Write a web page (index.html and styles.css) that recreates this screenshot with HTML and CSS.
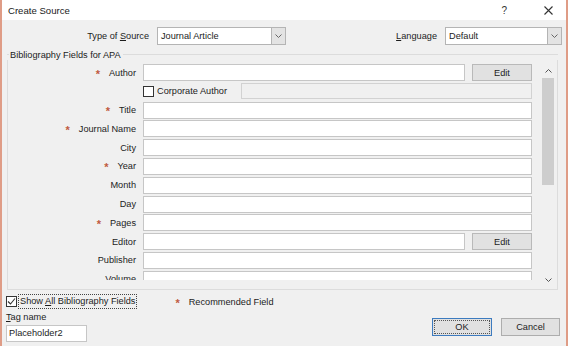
FILE: index.html
```html
<!DOCTYPE html>
<html lang="en">
<head>
    <meta charset="UTF-8">
    <title>Create Source</title>
    <link rel="stylesheet" href="styles.css">
</head>
<body>
    <div class="window">
        <header class="titlebar">
            <span class="title">Create Source</span>
            <span class="help">?</span>
            <span class="close">
                <svg width="9" height="9" viewBox="0 0 9 9"><path d="M0.5 0.5 L8.5 8.5 M8.5 0.5 L0.5 8.5" stroke="#333" stroke-width="1.1" fill="none"/></svg>
            </span>
        </header>

        <div class="content">
            <!-- Source type / language -->
            <div class="source-row">
                <span class="lbl-source">Type of <u>S</u>ource</span>
                <div class="select select-type">
                    <span class="select-text">Journal Article</span>
                    <span class="drop"><svg width="7" height="4" viewBox="0 0 7 4"><path d="M0.5 0.5 L3.5 3.5 L6.5 0.5" stroke="#666" fill="none"/></svg></span>
                </div>
                <span class="lbl-lang"><u>L</u>anguage</span>
                <div class="select select-lang">
                    <span class="select-text">Default</span>
                    <span class="drop"><svg width="7" height="4" viewBox="0 0 7 4"><path d="M0.5 0.5 L3.5 3.5 L6.5 0.5" stroke="#666" fill="none"/></svg></span>
                </div>
            </div>

            <!-- Bibliography fields group -->
            <div class="group">
                <div class="group-title"><span>Bibliography Fields for APA</span></div>
                <div class="group-body">
                    <div class="fields">
                        <div class="lbl"><span class="star">*</span>Author</div>
                        <div class="cell"><div class="input"></div><div class="btn edit">Edit</div></div>

                        <div class="lbl"></div>
                        <div class="cell corp">
                            <span class="checkbox"></span>
                            <span class="corp-text">Corporate Author</span>
                            <div class="input disabled"></div>
                        </div>

                        <div class="lbl"><span class="star">*</span>Title</div>
                        <div class="cell"><div class="input"></div></div>

                        <div class="lbl"><span class="star">*</span>Journal Name</div>
                        <div class="cell"><div class="input"></div></div>

                        <div class="lbl">City</div>
                        <div class="cell"><div class="input"></div></div>

                        <div class="lbl"><span class="star">*</span>Year</div>
                        <div class="cell"><div class="input"></div></div>

                        <div class="lbl">Month</div>
                        <div class="cell"><div class="input"></div></div>

                        <div class="lbl">Day</div>
                        <div class="cell"><div class="input"></div></div>

                        <div class="lbl"><span class="star">*</span>Pages</div>
                        <div class="cell"><div class="input"></div></div>

                        <div class="lbl">Editor</div>
                        <div class="cell"><div class="input"></div><div class="btn edit">Edit</div></div>

                        <div class="lbl">Publisher</div>
                        <div class="cell"><div class="input"></div></div>

                        <div class="lbl">Volume</div>
                        <div class="cell"><div class="input"></div></div>
                    </div>

                    <div class="scrollbar">
                        <div class="arrow"><svg width="7" height="4" viewBox="0 0 7 4"><path d="M0.5 3.5 L3.5 0.5 L6.5 3.5" stroke="#555" fill="none"/></svg></div>
                        <div class="thumb"></div>
                        <div class="track"></div>
                        <div class="arrow"><svg width="7" height="4" viewBox="0 0 7 4"><path d="M0.5 0.5 L3.5 3.5 L6.5 0.5" stroke="#555" fill="none"/></svg></div>
                    </div>
                </div>
            </div>

            <!-- Footer -->
            <div class="footer">
                <div class="footer-top">
                    <span class="checkbox checked">
                        <svg width="9" height="9" viewBox="0 0 9 9"><path d="M1 4.5 L3.5 7 L8 1.5" stroke="#333" stroke-width="1.1" fill="none"/></svg>
                    </span>
                    <span class="show-all">Show <u>A</u>ll Bibliography Fields</span>
                    <span class="star legend-star">*</span>
                    <span class="legend-text">Recommended Field</span>
                </div>
                <div class="footer-bottom">
                    <div class="tag">
                        <div class="tag-label"><u>T</u>ag name</div>
                        <div class="input tag-input">Placeholder2</div>
                    </div>
                    <div class="buttons">
                        <div class="btn ok"><span>OK</span></div>
                        <div class="btn cancel">Cancel</div>
                    </div>
                </div>
            </div>
        </div>
    </div>
</body>
</html>
```

FILE: styles.css
```css
body {
    margin: 0;
    font-family: "Liberation Sans", Arial, sans-serif;
    font-size: 9.2px;
    color: #1c1c1c;
    background: #f0f0f0;
}

u {
    text-decoration-thickness: 1px;
    text-underline-offset: 1px;
}

.window {
    width: 568px;
    height: 346px;
    box-sizing: border-box;
    border-left: 2px solid #df9c86;
    border-right: 2px solid #df9c86;
    background: #f0f0f0;
    overflow: hidden;
}

/* Title bar */
.titlebar {
    height: 20px;
    background: #fff;
    display: flex;
    align-items: center;
    padding-left: 6px;
}

.title {
    font-size: 9.6px;
    color: #1a1a1a;
    flex-grow: 1;
}

.help {
    font-size: 10px;
    color: #333;
    margin-right: 37px;
}

.close {
    display: flex;
    margin-right: 13px;
}

.content {
    padding-top: 7px;
}

/* Source row */
.source-row {
    display: flex;
    align-items: center;
    height: 18px;
}

.lbl-source {
    width: 147px;
    text-align: right;
    margin-right: 8px;
}

.lbl-lang {
    margin-left: auto;
    margin-right: 8px;
}

.select {
    height: 18px;
    box-sizing: border-box;
    background: #fff;
    border: 1px solid #b4b4b4;
    display: flex;
    align-items: center;
}

.select-type {
    width: 129px;
}

.select-lang {
    width: 117px;
    margin-right: 4px;
}

.select-text {
    flex-grow: 1;
    padding-left: 3px;
}

.drop {
    width: 14px;
    height: 16px;
    box-sizing: border-box;
    border-left: 1px solid #b4b4b4;
    background: #e3e3e3;
    display: flex;
    align-items: center;
    justify-content: center;
}

/* Group box */
.group {
    margin: 4px 8px 0 5px;
}

.group-title {
    display: flex;
    align-items: center;
    height: 11px;
}

.group-title::before {
    content: "";
    width: 2px;
    border-top: 1px solid #dcdcdc;
    margin-right: 1px;
}

.group-title::after {
    content: "";
    flex-grow: 1;
    border-top: 1px solid #dcdcdc;
    margin-left: 2px;
}

.group-body {
    height: 230px;
    box-sizing: border-box;
    border: 1px solid #dcdcdc;
    border-top: none;
    padding: 3px 2px 0 0;
    display: flex;
    align-items: flex-start;
}

.fields {
    margin-top: 1px;
    height: 216px;
    overflow: hidden;
    display: grid;
    grid-template-columns: 128px 389px;
    grid-auto-rows: 17px;
    column-gap: 7px;
    row-gap: 1.8px;
}

.lbl {
    display: flex;
    align-items: center;
    justify-content: flex-end;
}

.star {
    color: #bf5a3f;
    font-weight: bold;
    font-size: 11px;
    margin-right: 9px;
    position: relative;
    top: 1px;
}

.cell {
    display: flex;
    align-items: center;
}

.input {
    height: 17px;
    box-sizing: border-box;
    flex-grow: 1;
    background: #fff;
    border: 1px solid #c6c6c6;
}

.input.disabled {
    flex-grow: 0;
    width: 291px;
    height: 16px;
    margin-left: auto;
    background: #f0f0f0;
    border-color: #d2d2d2;
}

.btn {
    box-sizing: border-box;
    background: #e1e1e1;
    border: 1px solid #b9b9b9;
    display: flex;
    align-items: center;
    justify-content: center;
    color: #1c1c1c;
}

.edit {
    width: 60px;
    height: 17px;
    margin-left: 7px;
}

.checkbox {
    width: 11px;
    height: 11px;
    box-sizing: border-box;
    border: 1px solid #333;
    background: #fff;
    display: inline-flex;
    align-items: center;
    justify-content: center;
}

.corp-text {
    margin-left: 3px;
}

/* Scrollbar */
.scrollbar {
    width: 14px;
    height: 224px;
    margin-left: 9px;
    display: flex;
    flex-direction: column;
    background: #f0f0f0;
}

.arrow {
    height: 15px;
    display: flex;
    align-items: center;
    justify-content: center;
}

.thumb {
    height: 107px;
    margin: 0 1px;
    background: #cdcdcd;
}

.track {
    flex-grow: 1;
}

/* Footer */
.footer {
    padding: 0 6px 0 4px;
}

.footer-top {
    display: flex;
    align-items: center;
    height: 15px;
    margin-top: 4px;
}

.show-all {
    margin-left: 2px;
    padding: 1px 1px 2px 1px;
    outline: 1px dotted #444;
}

.legend-star {
    margin-left: 39px;
}

.footer-bottom {
    display: flex;
    justify-content: space-between;
    align-items: flex-end;
    margin-top: 3px;
}

.tag-label {
    height: 13px;
    line-height: 11px;
}

.tag-input {
    width: 81px;
    padding-left: 2px;
    line-height: 15px;
}

.buttons {
    display: flex;
    margin-bottom: 6px;
}

.ok {
    width: 60px;
    height: 18px;
    border: 1px solid #3d7bbf;
    padding: 2px;
}

.ok span {
    width: 100%;
    height: 100%;
    outline: 1px dotted #555;
    display: flex;
    align-items: center;
    justify-content: center;
}

.cancel {
    width: 59px;
    height: 18px;
    margin-left: 9px;
    border-color: #adadad;
}
```
